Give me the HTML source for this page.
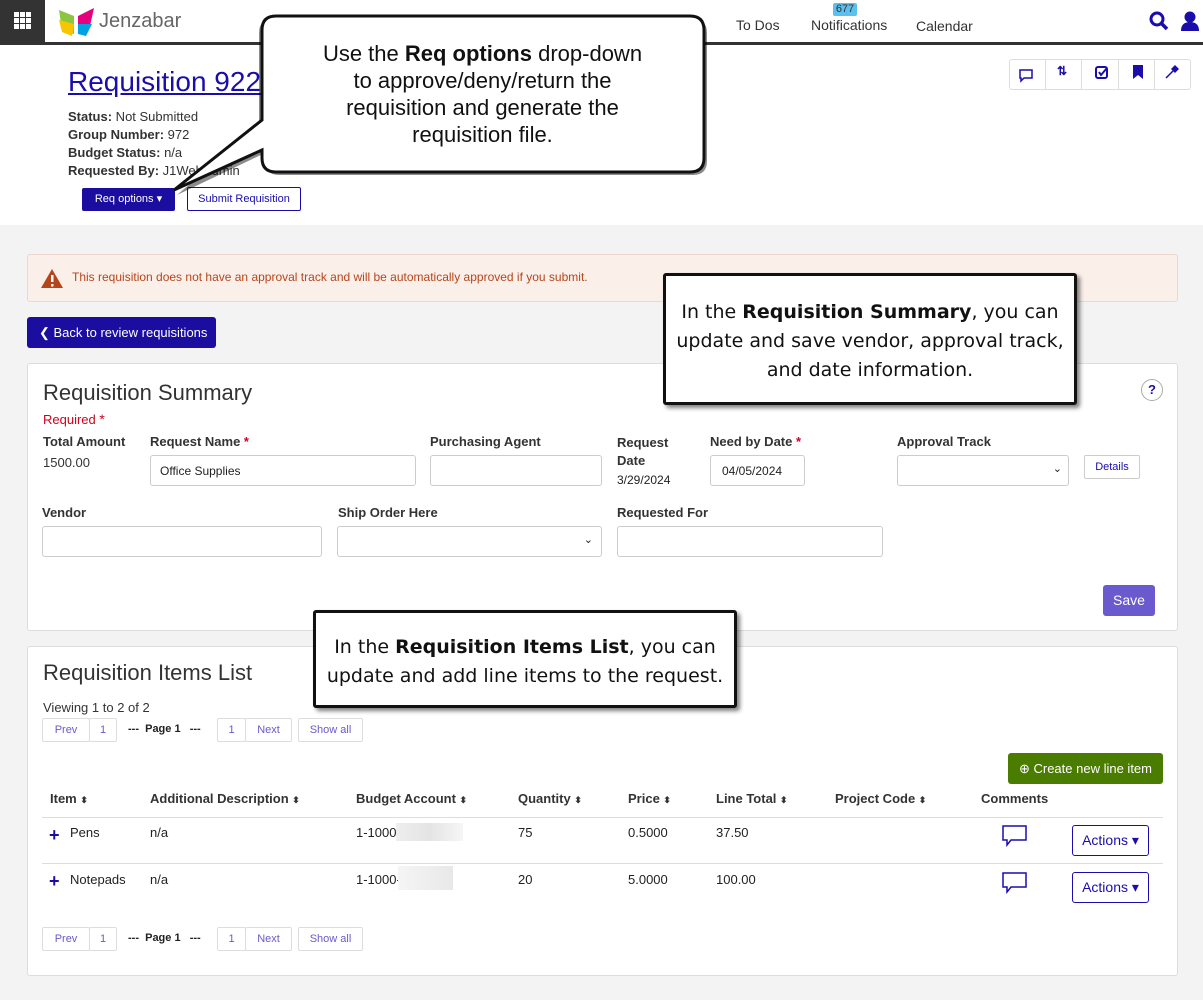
<!DOCTYPE html>
<html><head><meta charset="utf-8"><style>
*{box-sizing:border-box;margin:0;padding:0}
body{width:1203px;height:1000px;position:relative;overflow:hidden;background:#f3f3f3;font-family:"Liberation Sans",Arial,sans-serif;font-size:13px;color:#222}
.a{position:absolute}
.top{left:0;top:0;width:1203px;height:45px;background:#fff;border-bottom:3px solid #333}
.grid{left:0;top:0;width:45px;height:43px;background:#333}
.head{left:0;top:45px;width:1203px;height:180px;background:#fff}
.card{background:#fff;border:1px solid #ddd;border-radius:3px}
.inp{background:#fff;border:1px solid #ccc;border-radius:3px;height:31px}
.lbl{font-weight:bold;font-size:13px;color:#333}
.pg{height:24px;border:1px solid #ddd;border-radius:2px;background:#fff;color:#6a5acd;font-size:11px;line-height:22px;text-align:center}
.call{background:#fff;border:3px solid #111;box-shadow:3px 3px 4px rgba(0,0,0,.5);text-align:center;color:#111}
.th{font-weight:bold;color:#333;font-size:13px}
.sort{font-size:9px}
.act{width:77px;height:31px;border:1px solid #1a0dab;border-radius:3px;color:#1a0dab;font-size:14px;line-height:29px;text-align:center;background:#fff}
</style></head><body>
<div class="a top"></div>
<div class="a grid"><svg width="45" height="43"><g fill="#fff"><rect x="14" y="12" width="5" height="5"/><rect x="20" y="12" width="5" height="5"/><rect x="26" y="12" width="5" height="5"/><rect x="14" y="18" width="5" height="5"/><rect x="20" y="18" width="5" height="5"/><rect x="26" y="18" width="5" height="5"/><rect x="14" y="24" width="5" height="5"/><rect x="20" y="24" width="5" height="5"/><rect x="26" y="24" width="5" height="5"/></g></svg></div>
<svg class="a" style="left:56px;top:6px" width="42" height="32"><path d="M3 4 L18 10 L18 28 L6 24Z" fill="#8cc63f"/><path d="M3 14 L18 18 L16 30 L6 26Z" fill="#f7c600"/><path d="M38 2 L22 10 L22 28 L34 20Z" fill="#e6007e"/><path d="M22 18 L36 18 L30 30 L22 28Z" fill="#00a0e3"/></svg>
<div class="a" style="left:99px;top:10px;font-size:20px;color:#666">Jenzabar</div>
<div class="a" style="left:736px;top:17px;font-size:14px;color:#333">To Dos</div>
<div class="a" style="left:833px;top:3px;width:24px;height:13px;background:#5bc0ee;border-radius:2px;font-size:11px;text-align:center;line-height:13px;color:#333">677</div>
<div class="a" style="left:811px;top:17px;font-size:14px;color:#333">Notifications</div>
<div class="a" style="left:916px;top:18px;font-size:14px;color:#333">Calendar</div>
<svg class="a" style="left:1149px;top:11px" width="20" height="20"><circle cx="8" cy="8" r="6" stroke="#1a0dab" stroke-width="3" fill="none"/><path d="M12 12 L18 18" stroke="#1a0dab" stroke-width="3.5"/></svg>
<svg class="a" style="left:1180px;top:10px" width="20" height="22"><circle cx="10" cy="7" r="5.5" fill="#1a0dab"/><path d="M1 21 Q1 12 10 12 Q19 12 19 21Z" fill="#1a0dab"/></svg>
<div class="a head"></div>
<div class="a" style="left:1009px;top:59px;width:182px;height:31px;border:1px solid #ddd;border-radius:3px;background:#fff;display:flex">
<div style="flex:1;border-right:1px solid #ddd"></div><div style="flex:1;border-right:1px solid #ddd"></div><div style="flex:1;border-right:1px solid #ddd"></div><div style="flex:1;border-right:1px solid #ddd"></div><div style="flex:1"></div></div>
<svg class="a" style="left:1019px;top:69px" width="16" height="14"><path d="M1 1H13V9H5L2 12V9H1Z" fill="none" stroke="#1a0dab" stroke-width="1.5"/></svg>
<div class="a" style="left:1057px;top:64px;color:#1a0dab;font-size:12px;font-weight:bold">⇅</div>
<svg class="a" style="left:1095px;top:66px" width="14" height="14"><rect x="1" y="1" width="11" height="11" rx="2" fill="none" stroke="#1a0dab" stroke-width="2"/><path d="M4 6 L6 9 L12 2" fill="none" stroke="#1a0dab" stroke-width="2"/></svg>
<svg class="a" style="left:1133px;top:65px" width="10" height="14"><path d="M0 0H10V14L5 10L0 14Z" fill="#1a0dab"/></svg>
<svg class="a" style="left:1165px;top:65px" width="14" height="14"><path d="M1 13 L8 6" stroke="#1a0dab" stroke-width="1.5"/><path d="M6 4 L10 0 L14 4 L10 8Z" fill="#1a0dab"/></svg>
<div class="a" style="left:68px;top:66px;font-size:28px;color:#1a0dab;text-decoration:underline">Requisition 922</div>
<div class="a" style="left:68px;top:108px;line-height:18px;font-size:13px;color:#333"><b>Status:</b> Not Submitted<br><b>Group Number:</b> 972<br><b>Budget Status:</b> n/a<br><b>Requested By:</b> J1WebAdmin</div>
<div class="a" style="left:82px;top:188px;width:93px;height:23px;background:#1a0da0;border-radius:2px;color:#fff;font-size:11px;line-height:23px;text-align:center">Req options ▾</div>
<div class="a" style="left:187px;top:187px;width:114px;height:24px;border:1px solid #1a0dab;border-radius:2px;color:#1a0dab;font-size:11px;line-height:22px;text-align:center;background:#fff">Submit Requisition</div>
<div class="a" style="left:27px;top:254px;width:1151px;height:48px;background:#fbefea;border:1px solid #ecd8cf;border-radius:3px"></div>
<svg class="a" style="left:40px;top:268px" width="24" height="21"><path d="M12 1 L23 20 H1Z" fill="#b5461b"/><rect x="11" y="7" width="2.5" height="7" fill="#fff"/><rect x="11" y="16" width="2.5" height="2.5" fill="#fff"/></svg>
<div class="a" style="left:72px;top:270px;font-size:12px;color:#b5461b">This requisition does not have an approval track and will be automatically approved if you submit.</div>
<div class="a" style="left:27px;top:317px;width:189px;height:31px;background:#1a0da0;border-radius:3px;color:#fff;font-size:13px;line-height:31px;padding-left:12px">❮ Back to review requisitions</div>
<div class="a card" style="left:27px;top:363px;width:1151px;height:268px"></div>
<div class="a" style="left:43px;top:380px;font-size:22px;color:#333">Requisition Summary</div>
<div class="a" style="left:1141px;top:379px;width:22px;height:22px;border:1px solid #aaa;border-radius:50%;text-align:center;line-height:20px;font-weight:bold;color:#1a0dab;font-size:13px">?</div>
<div class="a" style="left:43px;top:411px;color:#d0021b">Required <span style="font-size:14px">*</span></div>
<div class="a lbl" style="left:43px;top:434px">Total Amount</div>
<div class="a" style="left:43px;top:455px;color:#333">1500.00</div>
<div class="a lbl" style="left:150px;top:434px">Request Name <span style="color:#d0021b">*</span></div>
<div class="a inp" style="left:150px;top:455px;width:266px;font-size:12px;padding:8px 9px">Office Supplies</div>
<div class="a lbl" style="left:430px;top:434px">Purchasing Agent</div>
<div class="a inp" style="left:430px;top:455px;width:172px"></div>
<div class="a lbl" style="left:617px;top:434px;line-height:18px">Request<br>Date</div>
<div class="a" style="left:617px;top:473px;font-size:12px">3/29/2024</div>
<div class="a lbl" style="left:710px;top:434px">Need by Date <span style="color:#d0021b">*</span></div>
<div class="a inp" style="left:710px;top:455px;width:95px;font-size:12px;padding:8px 11px">04/05/2024</div>
<div class="a lbl" style="left:897px;top:434px">Approval Track</div>
<div class="a inp" style="left:897px;top:455px;width:172px;text-align:right;padding:6px 6px;font-size:11px">⌄</div>
<div class="a" style="left:1084px;top:455px;width:56px;height:24px;border:1px solid #ccc;border-radius:2px;font-size:11px;color:#1a0dab;text-align:center;line-height:22px;background:#fff">Details</div>
<div class="a lbl" style="left:42px;top:505px">Vendor</div>
<div class="a inp" style="left:42px;top:526px;width:280px"></div>
<div class="a lbl" style="left:338px;top:505px">Ship Order Here</div>
<div class="a inp" style="left:337px;top:526px;width:265px;text-align:right;padding:6px 8px;font-size:11px">⌄</div>
<div class="a lbl" style="left:617px;top:505px">Requested For</div>
<div class="a inp" style="left:617px;top:526px;width:266px"></div>
<div class="a" style="left:1103px;top:585px;width:52px;height:31px;background:#6a5acd;border-radius:3px;color:#fff;text-align:center;line-height:31px;font-size:14px">Save</div>
<div class="a card" style="left:27px;top:646px;width:1151px;height:330px"></div>
<div class="a" style="left:43px;top:660px;font-size:22px;color:#333">Requisition Items List</div>
<div class="a" style="left:43px;top:700px;font-size:13px;color:#333">Viewing 1 to 2 of 2</div>
<div class="a pg" style="left:42px;top:718px;width:48px">Prev</div><div class="a pg" style="left:89px;top:718px;width:28px">1</div>
<div class="a" style="left:128px;top:723px;font-size:11px"><b>---&nbsp;&nbsp;Page 1&nbsp;&nbsp;&nbsp;---</b></div>
<div class="a pg" style="left:217px;top:718px;width:29px">1</div><div class="a pg" style="left:245px;top:718px;width:47px">Next</div>
<div class="a pg" style="left:298px;top:718px;width:65px">Show all</div>
<div class="a pg" style="left:42px;top:927px;width:48px">Prev</div><div class="a pg" style="left:89px;top:927px;width:28px">1</div>
<div class="a" style="left:128px;top:932px;font-size:11px"><b>---&nbsp;&nbsp;Page 1&nbsp;&nbsp;&nbsp;---</b></div>
<div class="a pg" style="left:217px;top:927px;width:29px">1</div><div class="a pg" style="left:245px;top:927px;width:47px">Next</div>
<div class="a pg" style="left:298px;top:927px;width:65px">Show all</div>
<div class="a" style="left:1008px;top:753px;width:155px;height:31px;background:#4a7c00;border-radius:3px;color:#fff;font-size:13px;line-height:31px;text-align:center">⊕ Create new line item</div>
<div class="a th" style="left:50px;top:791px">Item <span class="sort">⬍</span></div>
<div class="a th" style="left:150px;top:791px">Additional Description <span class="sort">⬍</span></div>
<div class="a th" style="left:356px;top:791px">Budget Account <span class="sort">⬍</span></div>
<div class="a th" style="left:518px;top:791px">Quantity <span class="sort">⬍</span></div>
<div class="a th" style="left:628px;top:791px">Price <span class="sort">⬍</span></div>
<div class="a th" style="left:716px;top:791px">Line Total <span class="sort">⬍</span></div>
<div class="a th" style="left:835px;top:791px">Project Code <span class="sort">⬍</span></div>
<div class="a th" style="left:981px;top:791px">Comments</div>
<div class="a" style="left:42px;top:817px;width:1121px;height:1px;background:#ddd"></div>
<div class="a" style="left:42px;top:863px;width:1121px;height:1px;background:#ddd"></div>
<div class="a" style="left:49px;top:825px;color:#1a0da0;font-size:18px;font-weight:bold">+</div>
<div class="a" style="left:70px;top:825px">Pens</div><div class="a" style="left:150px;top:825px">n/a</div><div class="a" style="left:356px;top:825px">1-1000-</div>
<div class="a" style="left:396px;top:823px;width:67px;height:18px;background:linear-gradient(90deg,#eee,#e4e4e4,#f6f6f6)"></div>
<div class="a" style="left:518px;top:825px">75</div><div class="a" style="left:628px;top:825px">0.5000</div><div class="a" style="left:716px;top:825px">37.50</div>
<div class="a" style="left:49px;top:871px;color:#1a0da0;font-size:18px;font-weight:bold">+</div>
<div class="a" style="left:70px;top:872px">Notepads</div><div class="a" style="left:150px;top:872px">n/a</div><div class="a" style="left:356px;top:872px">1-1000-</div>
<div class="a" style="left:398px;top:866px;width:55px;height:24px;background:linear-gradient(90deg,#f5f5f5,#e8e8e8)"></div>
<div class="a" style="left:518px;top:872px">20</div><div class="a" style="left:628px;top:872px">5.0000</div><div class="a" style="left:716px;top:872px">100.00</div>
<svg class="a" style="left:1002px;top:825px" width="26" height="22"><path d="M1 1H24V15H9L5 20V15H1Z" fill="none" stroke="#1a0dab" stroke-width="1.5"/></svg>
<svg class="a" style="left:1002px;top:872px" width="26" height="22"><path d="M1 1H24V15H9L5 20V15H1Z" fill="none" stroke="#1a0dab" stroke-width="1.5"/></svg>
<div class="a act" style="left:1072px;top:825px">Actions ▾</div>
<div class="a act" style="left:1072px;top:872px">Actions ▾</div>
<svg class="a" style="left:160px;top:10px" width="560" height="190">
<path d="M122 6 H530 Q544 6 544 20 V148 Q544 162 530 162 H116 Q102 162 102 148 V140 L14 182 L96 112 V20 Q96 6 110 6Z" fill="#000" opacity=".45" transform="translate(3,3)"/>
<path d="M116 6 H530 Q544 6 544 20 V148 Q544 162 530 162 H116 Q102 162 102 148 V140 L14 180 L102 110 V20 Q102 6 116 6Z" fill="#fff" stroke="#111" stroke-width="3"/>
</svg>
<div class="a" style="left:270px;top:40px;width:425px;text-align:center;font-size:22px;line-height:27px;color:#111">Use the <b>Req options</b> drop-down<br>to approve/deny/return the<br>requisition and generate the<br>requisition file.</div>
<div class="a call" style="left:663px;top:273px;width:414px;height:132px;border-radius:3px;padding-top:22px;font-family:'DejaVu Sans',sans-serif;font-size:19px;line-height:29px">In the <b>Requisition Summary</b>, you can update and save vendor, approval track, and date information.</div>
<div class="a call" style="left:313px;top:610px;width:424px;height:98px;border-radius:3px;padding-top:20px;font-family:'DejaVu Sans',sans-serif;font-size:19px;line-height:29px">In the <b>Requisition Items List</b>, you can update and add line items to the request.</div>
</body></html>
